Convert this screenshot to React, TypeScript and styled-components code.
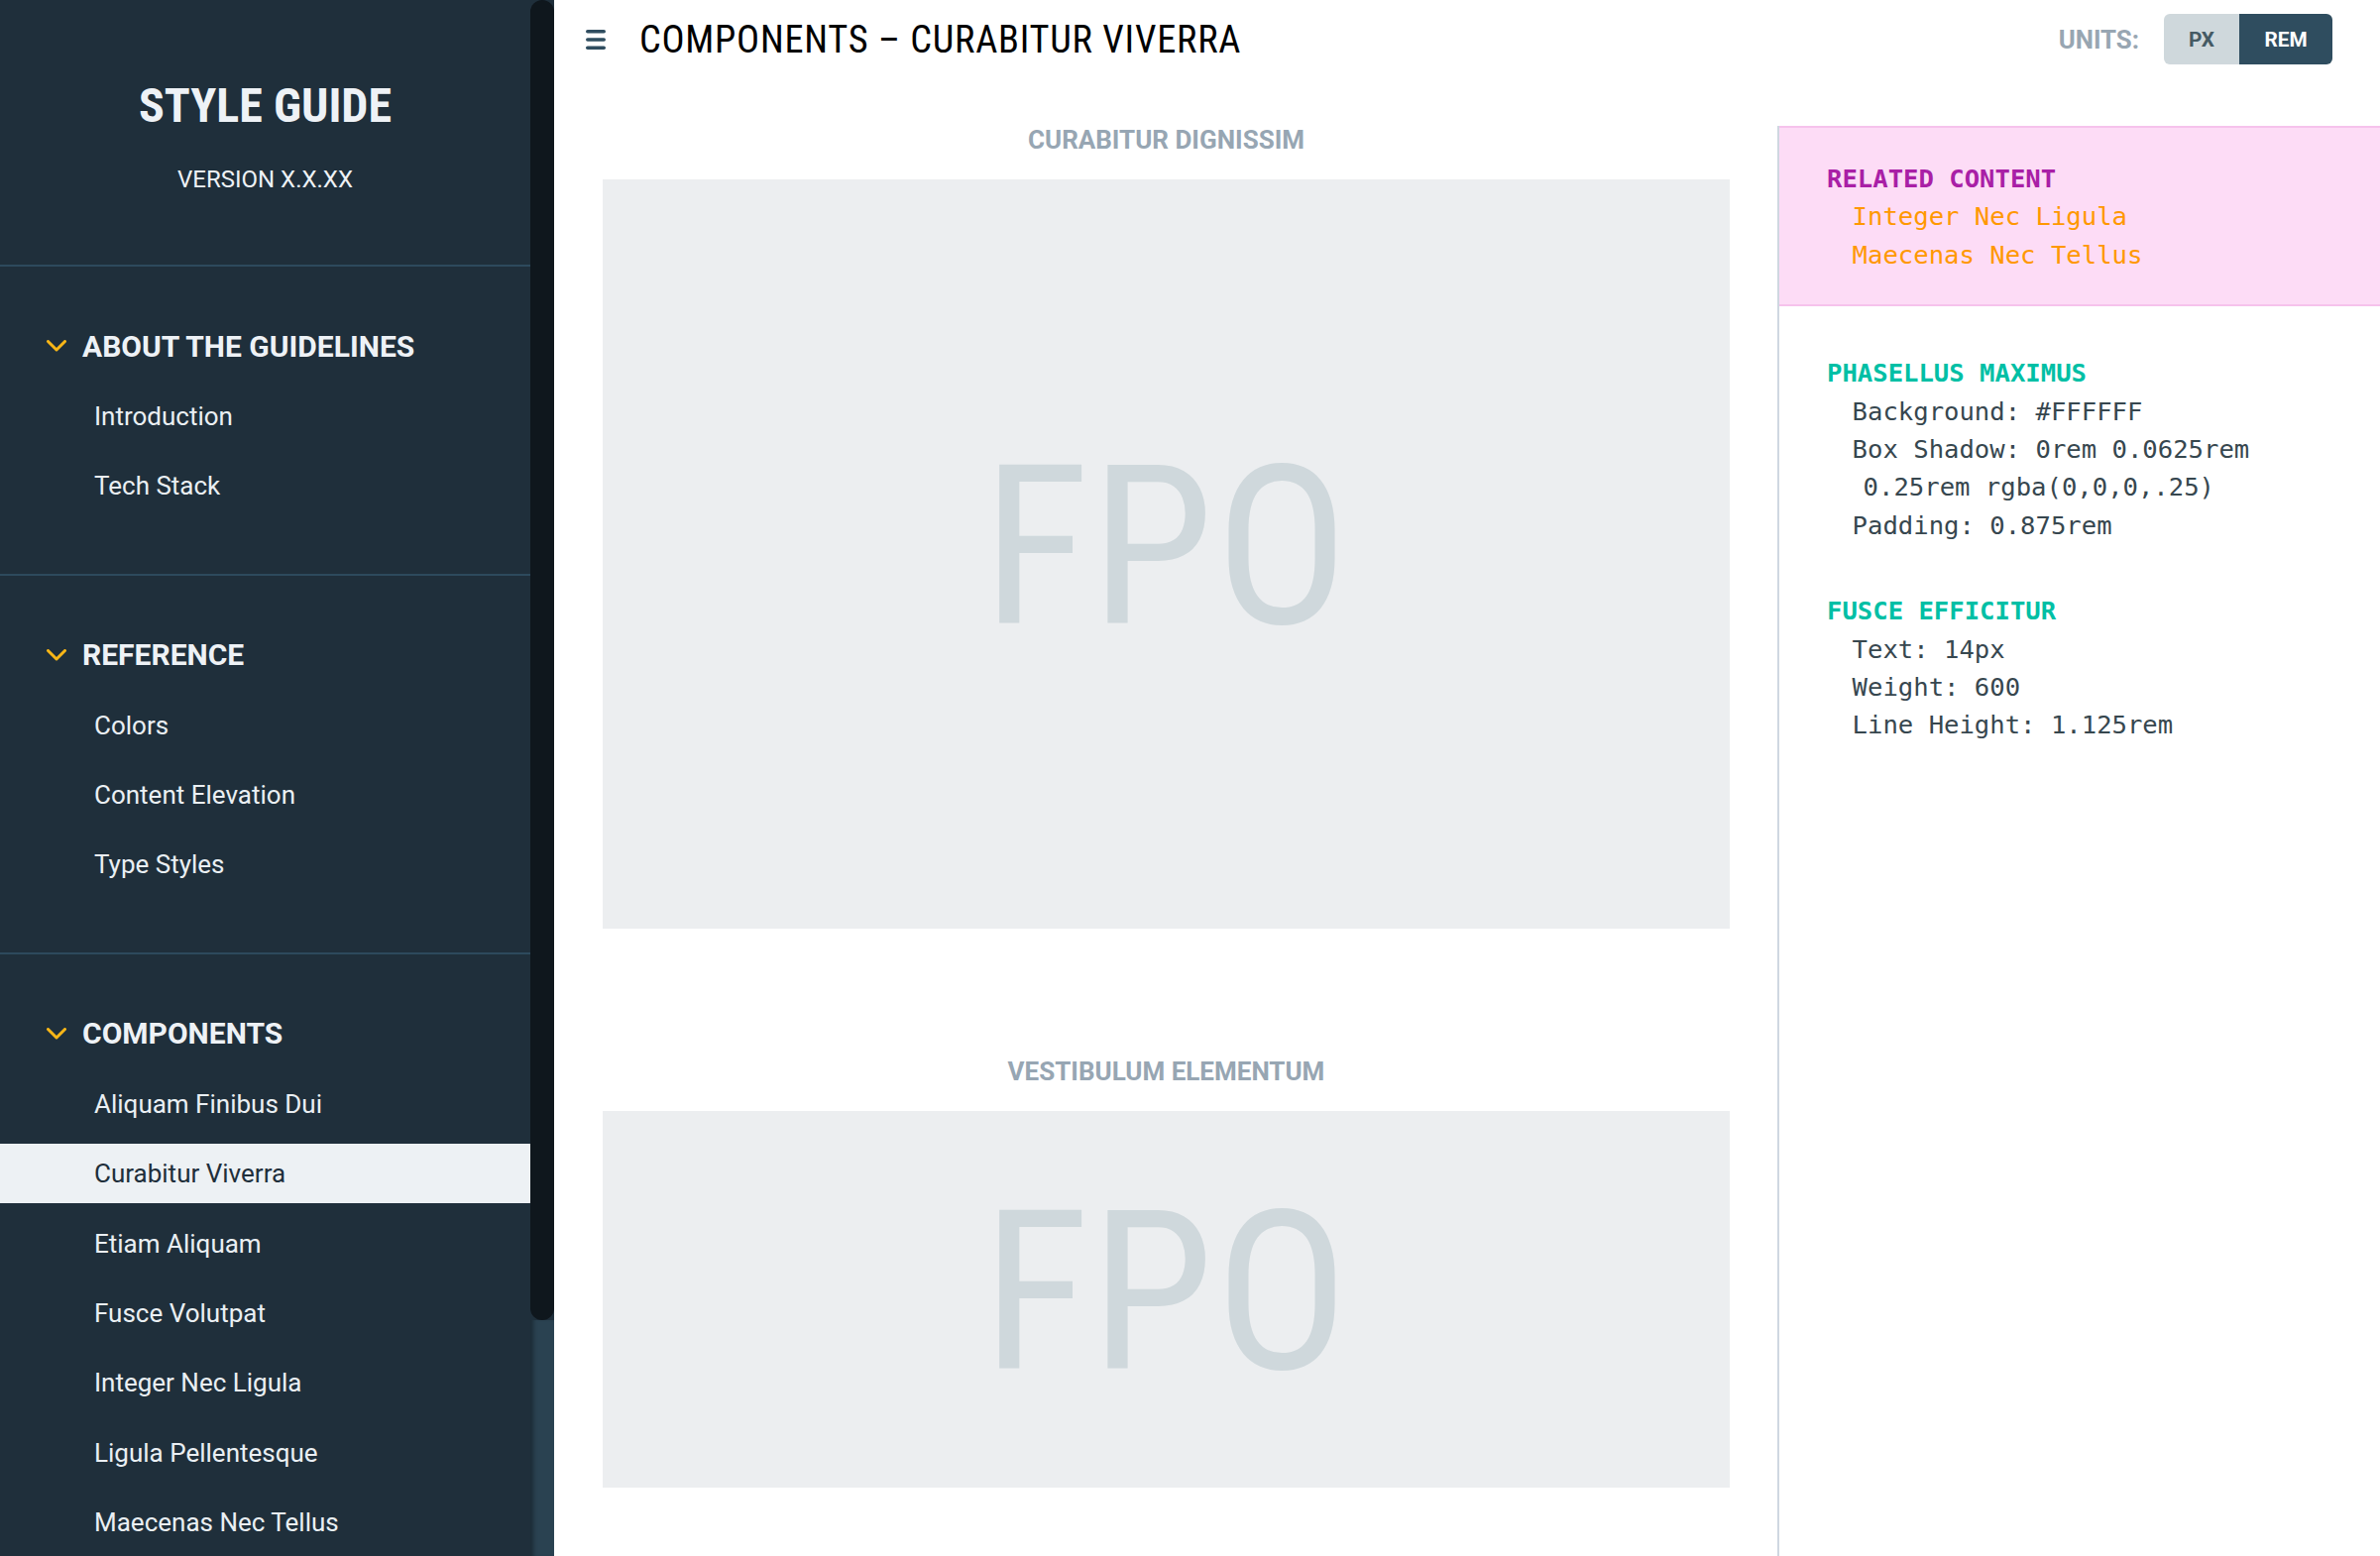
import React from "react";
import styled, { createGlobalStyle } from "styled-components";

const GlobalStyle = createGlobalStyle`
  html, body { margin: 0; padding: 0; background: #ffffff; }
  body { font-family: Roboto, "Noto Sans", "Liberation Sans", sans-serif; }
  * { box-sizing: border-box; }
`;

const Shell = styled.div`
  display: flex;
  width: 2401px;
  height: 1570px;
  overflow: hidden;
`;

const Sidebar = styled.nav`
  width: 535px;
  flex: none;
  background: #1f2f3b;
  display: flex;
  flex-direction: column;
`;

const Brand = styled.header`
  display: flex;
  flex-direction: column;
  align-items: center;
  padding: 79px 0 71px;
  border-bottom: 2px solid #2d4a5d;
`;

const BrandTitle = styled.h1`
  margin: 0;
  font-family: "Roboto Condensed", Roboto, sans-serif;
  font-stretch: condensed;
  font-weight: 700;
  font-size: 48px;
  line-height: 56px;
  color: #eef2f6;
  letter-spacing: 0;
`;

const Version = styled.div`
  margin-top: 31px;
  font-size: 24px;
  line-height: 30px;
  color: #eef2f6;
`;

const NavSection = styled.section<{ $last?: boolean }>`
  display: flex;
  flex-direction: column;
  gap: 10.4px;
  padding: 50px 0 59px;
  border-bottom: ${(p) => (p.$last ? "none" : "2px solid #2d4a5d")};
`;

const NavHeading = styled.div`
  display: flex;
  align-items: center;
  gap: 16px;
  height: 60px;
  padding-left: 47px;
  font-weight: 700;
  font-size: 30px;
  color: #eef2f6;
`;

const NavItem = styled.a<{ $active?: boolean }>`
  display: flex;
  align-items: center;
  height: 60px;
  padding: 1px 0 0 95px;
  font-size: 26px;
  text-decoration: none;
  color: ${(p) => (p.$active ? "#1f2f3b" : "#eaeff3")};
  background: ${(p) => (p.$active ? "#edf1f4" : "transparent")};
`;

const ScrollBar = styled.div`
  width: 24px;
  flex: none;
  display: flex;
  flex-direction: column;
  background: #1f2f3b;
`;

const Thumb = styled.div`
  height: 1332px;
  background: #0f171d;
  border-radius: 12px;
`;

const Track = styled.div`
  flex: 1;
  background: #2a4251;
  box-shadow: inset 6px 0 4px -3px rgba(0, 0, 0, 0.35);
`;

const Main = styled.main`
  flex: 1;
  display: flex;
  flex-direction: column;
  min-width: 0;
`;

const TopBar = styled.div`
  display: flex;
  align-items: center;
  height: 78px;
  padding: 1px 48px 0 32px;
`;

const PageTitle = styled.h2`
  margin: -1px 0 0 34px;
  font-family: "Roboto Condensed", Roboto, sans-serif;
  font-stretch: condensed;
  font-weight: 400;
  font-size: 38.4px;
  color: #000;
  letter-spacing: 0.75px;
  flex: 1;
`;

const UnitsLabel = styled.span`
  font-weight: 700;
  font-size: 25.8px;
  color: #98a6b2;
  margin-right: 25px;
`;

const Toggle = styled.div`
  display: flex;
  height: 51px;
  border-radius: 6px;
  overflow: hidden;
`;

const ToggleBtn = styled.button<{ $on?: boolean; $w: number }>`
  width: ${(p) => p.$w}px;
  border: none;
  margin: 0;
  font-family: Roboto, sans-serif;
  font-weight: 700;
  font-size: 20.8px;
  background: ${(p) => (p.$on ? "#2f4d5f" : "#cfd8dc")};
  color: ${(p) => (p.$on ? "#ffffff" : "#455a64")};
`;

const Body = styled.div`
  flex: 1;
  display: flex;
  min-height: 0;
`;

const Content = styled.div`
  flex: 1;
  padding: 44px 48px 0 49px;
  display: flex;
  flex-direction: column;
  gap: 125.5px;
`;

const Example = styled.div`
  display: flex;
  flex-direction: column;
`;

const ExampleTitle = styled.h3`
  margin: 0 0 20.5px;
  text-align: center;
  font-weight: 700;
  font-size: 26px;
  line-height: 38px;
  color: #97a6b3;
`;

const Placeholder = styled.div<{ $h: number }>`
  height: ${(p) => p.$h}px;
  background: #eceef0;
  display: flex;
  align-items: center;
  justify-content: center;
  padding-bottom: 12px;
`;

const Fpo = styled.span`
  font-family: "Roboto Condensed", Roboto, sans-serif;
  font-stretch: condensed;
  font-size: 224px;
  line-height: 1;
  color: #cfd8dc;
  letter-spacing: 1.5px;
`;

const Aside = styled.aside`
  width: 608px;
  flex: none;
  margin-top: 49px;
  border-left: 2px solid #cfd7e1;
  font-family: "DejaVu Sans Mono", "Liberation Mono", monospace;
  font-size: 25.6px;
  line-height: 38.4px;
`;

const Related = styled.div`
  background: #fddcf6;
  border-top: 2px solid #f6c2ec;
  border-bottom: 2px solid #f6c2ec;
  padding: 32px 0 31px 48px;
`;

const SpecGroup = styled.div`
  padding-left: 48px;
  margin-top: 48px;
`;

const SpecHeading = styled.div<{ $color: string }>`
  font-weight: 700;
  color: ${(p) => p.$color};
`;

const SpecLine = styled.div<{ $color?: string; $indent?: number }>`
  padding-left: ${(p) => 25.6 + (p.$indent || 0)}px;
  white-space: pre;
  color: ${(p) => p.$color || "#37474f"};
`;

const Chevron = () => (
  <svg width="20" height="12" viewBox="0 0 20 12" fill="none">
    <path d="M1.5 1.5 L10 10 L18.5 1.5" stroke="#f8b617" strokeWidth="3" strokeLinecap="round" strokeLinejoin="round" />
  </svg>
);

const Hamburger = () => (
  <svg width="20" height="20" viewBox="0 0 20 20">
    <rect x="0" y="0" width="20" height="3.6" rx="1.8" fill="#2f4d5f" />
    <rect x="0" y="8.2" width="20" height="3.6" rx="1.8" fill="#2f4d5f" />
    <rect x="0" y="16.4" width="20" height="3.6" rx="1.8" fill="#2f4d5f" />
  </svg>
);

const sections = [
  { title: "ABOUT THE GUIDELINES", items: ["Introduction", "Tech Stack"] },
  { title: "REFERENCE", items: ["Colors", "Content Elevation", "Type Styles"] },
  {
    title: "COMPONENTS",
    items: [
      "Aliquam Finibus Dui",
      "Curabitur Viverra",
      "Etiam Aliquam",
      "Fusce Volutpat",
      "Integer Nec Ligula",
      "Ligula Pellentesque",
      "Maecenas Nec Tellus",
    ],
  },
];

export default function App() {
  return (
    <>
      <GlobalStyle />
      <Shell>
        <Sidebar>
          <Brand>
            <BrandTitle>STYLE GUIDE</BrandTitle>
            <Version>VERSION X.X.XX</Version>
          </Brand>
          {sections.map((s, i) => (
            <NavSection key={s.title} $last={i === sections.length - 1}>
              <NavHeading>
                <Chevron />
                {s.title}
              </NavHeading>
              {s.items.map((it) => (
                <NavItem key={it} $active={it === "Curabitur Viverra"}>
                  {it}
                </NavItem>
              ))}
            </NavSection>
          ))}
        </Sidebar>
        <ScrollBar>
          <Thumb />
          <Track />
        </ScrollBar>
        <Main>
          <TopBar>
            <Hamburger />
            <PageTitle>COMPONENTS – CURABITUR VIVERRA</PageTitle>
            <UnitsLabel>UNITS:</UnitsLabel>
            <Toggle>
              <ToggleBtn $w={76}>PX</ToggleBtn>
              <ToggleBtn $w={94} $on>
                REM
              </ToggleBtn>
            </Toggle>
          </TopBar>
          <Body>
            <Content>
              <Example>
                <ExampleTitle>CURABITUR DIGNISSIM</ExampleTitle>
                <Placeholder $h={756}>
                  <Fpo>FPO</Fpo>
                </Placeholder>
              </Example>
              <Example>
                <ExampleTitle>VESTIBULUM ELEMENTUM</ExampleTitle>
                <Placeholder $h={380}>
                  <Fpo>FPO</Fpo>
                </Placeholder>
              </Example>
            </Content>
            <Aside>
              <Related>
                <SpecHeading $color="#a91fa6">RELATED CONTENT</SpecHeading>
                <SpecLine $color="#ff9800">Integer Nec Ligula</SpecLine>
                <SpecLine $color="#ff9800">Maecenas Nec Tellus</SpecLine>
              </Related>
              <SpecGroup>
                <SpecHeading $color="#00bfa5">PHASELLUS MAXIMUS</SpecHeading>
                <SpecLine>Background: #FFFFFF</SpecLine>
                <SpecLine>Box Shadow: 0rem 0.0625rem</SpecLine>
                <SpecLine $indent={11}>0.25rem rgba(0,0,0,.25)</SpecLine>
                <SpecLine>Padding: 0.875rem</SpecLine>
              </SpecGroup>
              <SpecGroup>
                <SpecHeading $color="#00bfa5">FUSCE EFFICITUR</SpecHeading>
                <SpecLine>Text: 14px</SpecLine>
                <SpecLine>Weight: 600</SpecLine>
                <SpecLine>Line Height: 1.125rem</SpecLine>
              </SpecGroup>
            </Aside>
          </Body>
        </Main>
      </Shell>
    </>
  );
}
